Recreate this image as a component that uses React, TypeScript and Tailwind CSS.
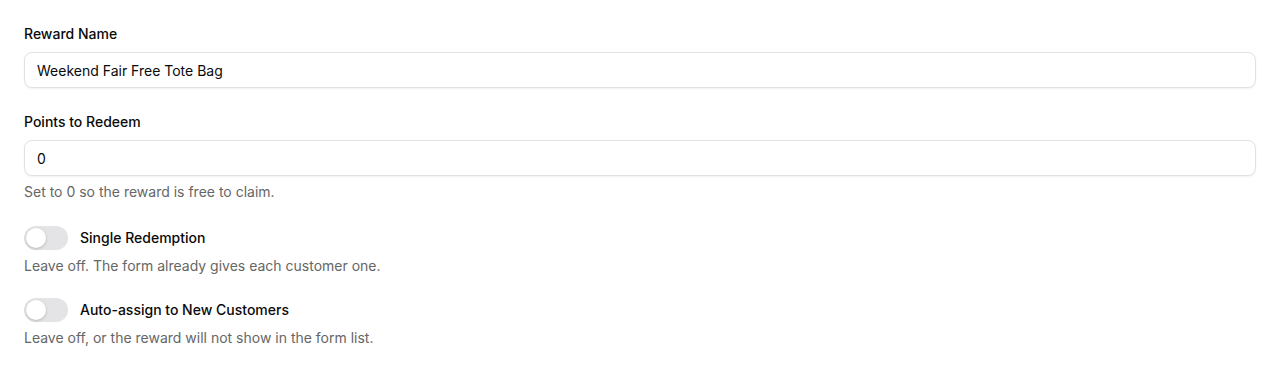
import { useState } from "react";

function Field({ label, value, help }: { label: string; value: string; help?: string }) {
  return (
    <div className="flex flex-col">
      <label className="text-sm font-medium leading-5 text-[#0a0a0a]">{label}</label>
      <input
        readOnly
        value={value}
        className="mt-2 h-9 w-full rounded-lg border border-[#e2e2e2] bg-white px-3 text-sm text-[#0a0a0a] shadow-[0_1px_2px_rgba(0,0,0,0.05)] outline-none"
      />
      {help ? <p className="mt-1.5 text-sm leading-5 text-[#666]">{help}</p> : null}
    </div>
  );
}

function ToggleField({ label, help }: { label: string; help: string }) {
  const [on, setOn] = useState(false);
  return (
    <div className="flex flex-col">
      <div className="flex items-center gap-3">
        <button
          type="button"
          onClick={() => setOn(!on)}
          className={`flex h-6 w-11 items-center rounded-full p-0.5 ${on ? "bg-[#111]" : "bg-[#e4e4e7]"}`}
        >
          <span
            className={`size-5 rounded-full bg-white shadow-[0_1px_3px_rgba(0,0,0,0.2)] transition-transform ${on ? "translate-x-5" : ""}`}
          />
        </button>
        <span className="text-sm font-medium leading-5 text-[#0a0a0a]">{label}</span>
      </div>
      <p className="mt-1.5 text-sm leading-5 text-[#666]">{help}</p>
    </div>
  );
}

export default function App() {
  return (
    <div className="flex min-h-[372px] flex-col bg-white px-6 pt-6 font-['Inter',sans-serif]">
      <Field label="Reward Name" value="Weekend Fair Free Tote Bag" />
      <div className="mt-6">
        <Field label="Points to Redeem" value="0" help="Set to 0 so the reward is free to claim." />
      </div>
      <div className="mt-6">
        <ToggleField label="Single Redemption" help="Leave off. The form already gives each customer one." />
      </div>
      <div className="mt-[22px]">
        <ToggleField label="Auto-assign to New Customers" help="Leave off, or the reward will not show in the form list." />
      </div>
    </div>
  );
}
